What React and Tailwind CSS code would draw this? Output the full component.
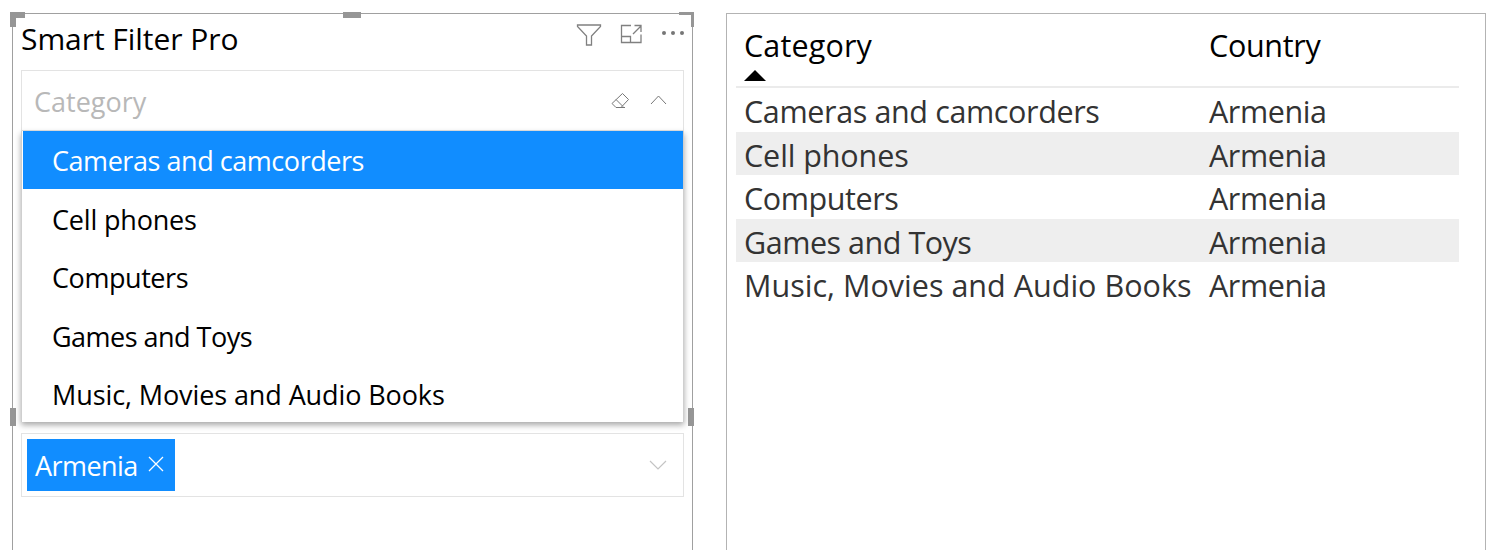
const categories = [
  { name: "Cameras and camcorders", option: "tracking-[-0.45px]", cell: "tracking-[-0.37px]" },
  { name: "Cell phones", option: "tracking-[-0.18px]", cell: "tracking-[-0.1px]" },
  { name: "Computers", option: "tracking-[-0.43px]", cell: "tracking-[-0.42px]" },
  { name: "Games and Toys", option: "tracking-[-0.52px]", cell: "tracking-[-0.48px]" },
  { name: "Music, Movies and Audio Books", option: "tracking-[-0.1px]", cell: "tracking-[0.02px]" },
];

function Handles() {
  return (
    <>
      <span className="absolute -left-[3px] -top-[2px] size-[15px] border-l-6 border-t-6 border-[#969696]" />
      <span className="absolute left-[330px] -top-[2px] h-[6px] w-[18px] bg-[#969696]" />
      <span className="absolute -right-[2px] -top-[2px] size-[15px] border-r-3 border-t-3 border-[#969696]" />
      <span className="absolute -left-[3px] top-[394px] h-[18px] w-[6px] bg-[#969696]" />
      <span className="absolute -right-[2px] top-[394px] h-[18px] w-[6px] bg-[#969696]" />
    </>
  );
}

function VisualActions() {
  return (
    <svg className="h-[26px] w-[110px]" viewBox="576 21 110 26" fill="none" stroke="#808080" strokeWidth="1.3">
      <path d="M577.5 25H600.5V26.5L591.5 36V45H586.5V36L577.5 26.5Z" />
      <path d="M631 25.5H621.5V42.5H641V34.5M621.5 36.5H630.5V42.5M633 34L641 26M634.5 25.5H641V32" />
      <g fill="#767676" stroke="none">
        <circle cx="664" cy="33" r="2" />
        <circle cx="673" cy="33" r="2" />
        <circle cx="682" cy="33" r="2" />
      </g>
    </svg>
  );
}

function FilterPanel() {
  return (
    <section className="relative h-[537px] w-[681px] border border-b-0 border-[#a0a0a0] px-2">
      <Handles />
      <header className="flex h-14 items-start justify-between">
        <h1 className="mt-[4px] text-[30px] leading-[42px] tracking-[-0.05px] text-black">Smart Filter Pro</h1>
        <div className="-mr-[7px] mt-[7px] w-[115px]"><VisualActions /></div>
      </header>
      <div className="flex h-[61px] items-center justify-between border border-[#e3e3e3] pl-3 pr-[15px]">
        <span className="pt-[3px] text-[27px] leading-[38px] text-[#b8b8b8]">Category</span>
        <svg className="h-5 w-[58px]" viewBox="610 91 58 20" fill="none" stroke="#777777" strokeWidth="1">
          <path d="M612 103.5L622.5 93.5L628.5 99.5L621 107.5H616Z M616 99.5L623 106.5M619 107.5H625" />
          <path d="M651 104L658.5 96L666 104" />
        </svg>
      </div>
      <ul className="relative h-[291px] w-[663px] border-l border-r border-[#cfcfcf] bg-white shadow-[0_3px_6px_rgba(0,0,0,0.35)]">
        {categories.map(({ name, option }, i) => (
          <li
            key={name}
            className={
              i === 0
                ? "ml-px flex h-[58px] items-center bg-[#118dff] pl-[29px] pt-[2px] text-[27px] leading-[38px] text-white"
                : "flex h-[58.5px] items-center pl-[30px] pt-[3px] text-[27px] leading-[38px] text-black"
            }
          >
            <span className={option}>{name}</span>
          </li>
        ))}
      </ul>
      <div className="mt-[11px] flex h-16 items-center justify-between border border-[#e3e3e3] pl-[5px] pr-4">
        <span className="flex h-[52px] w-[148px] items-center bg-[#118dff] pl-2 text-[27px] leading-[38px] text-white">
          <span className="pt-[1px] tracking-[-0.55px]">Armenia</span>
          <svg className="-mt-[2px] ml-[10px] size-4" viewBox="0 0 16 16" fill="none" stroke="white" strokeWidth="1.3">
            <path d="M1 1L15 15M15 1L1 15" />
          </svg>
        </span>
        <svg className="h-[10px] w-[18px]" viewBox="0 0 18 10" fill="none" stroke="#c4c4c4" strokeWidth="1.2">
          <path d="M1 1L9 9L17 1" />
        </svg>
      </div>
    </section>
  );
}

function ResultTable() {
  return (
    <section className="h-[537px] w-[760px] border border-b-0 border-[#b3b3b3] pl-[9px]">
      <div className="grid h-[74px] w-[723px] grid-cols-[465px_1fr] border-b-2 border-[#ebebeb] pl-2 pt-[10px] text-[30.5px] leading-[42px] text-black">
        <div>
          <span className="block tracking-[0.15px]">Category</span>
          <svg className="mt-[3px] h-[12px] w-[23px]" viewBox="0 0 23 12">
            <path d="M0 12L11 1L22 12Z" />
          </svg>
        </div>
        <span className="tracking-[-0.3px]">Country</span>
      </div>
      {categories.map(({ name, cell }, i) => (
        <div
          key={name}
          className={
            i % 2
              ? "grid h-[43px] w-[723px] grid-cols-[465px_1fr] items-center bg-[#eeeeee] pl-2 pt-[3px] text-[30.5px] leading-[40px] text-[#333333]"
              : "grid h-[44px] w-[723px] grid-cols-[465px_1fr] items-center pl-2 pt-[2px] text-[30.5px] leading-[40px] text-[#333333]"
          }
        >
          <span className={cell}>{name}</span>
          <span className="tracking-[-0.43px]">Armenia</span>
        </div>
      ))}
    </section>
  );
}

export default function App() {
  return (
    <main className="flex h-[550px] w-[1500px] gap-[33px] overflow-hidden bg-white pl-3 pt-[13px] font-['Open_Sans','Noto_Sans',sans-serif]">
      <FilterPanel />
      <ResultTable />
    </main>
  );
}
